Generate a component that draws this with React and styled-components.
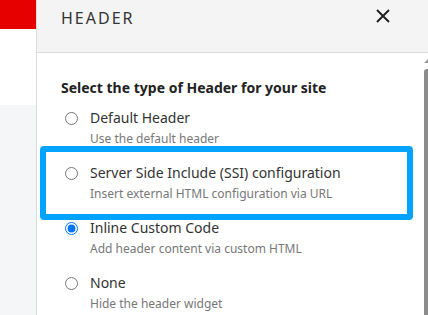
import React from 'react';
import styled, { createGlobalStyle } from 'styled-components';

const GlobalStyle = createGlobalStyle`
  html, body {
    margin: 0;
    padding: 0;
    background: #fff;
    font-family: "Noto Sans", "Open Sans", sans-serif;
  }
`

const options = [
  { id: 'default', label: 'Default Header', desc: 'Use the default header' },
  { id: 'ssi', label: 'Server Side Include (SSI) configuration', desc: 'Insert external HTML configuration via URL', highlight: true },
  { id: 'inline', label: 'Inline Custom Code', desc: 'Add header content via custom HTML' },
  { id: 'none', label: 'None', desc: 'Hide the header widget' },
]

function App() {
  return (
    <>
      <GlobalStyle />
      <Page>
        <SideRail>
          <Brand />
          <RailBlank />
          <RailFill />
        </SideRail>
        <Panel>
          <PanelHeader>
            <PanelTitle>HEADER</PanelTitle>
            <CloseButton aria-label="Close">
              <svg width="14" height="14" viewBox="0 0 14 14">
                <path d="M1 1 L13 13 M13 1 L1 13" stroke="#222" strokeWidth="2" fill="none" />
              </svg>
            </CloseButton>
          </PanelHeader>
          <PanelBody>
            <Content>
              <Question>Select the type of Header for your site</Question>
              <OptionList>
                {options.map((o) => (
                  <Option key={o.id}>
                    {o.highlight && <Highlight />}
                    <OptionRow>
                      <Radio type="radio" name="header-type" readOnly checked={o.id === 'inline'} />
                      <OptionLabel>{o.label}</OptionLabel>
                    </OptionRow>
                    <OptionDesc>{o.desc}</OptionDesc>
                  </Option>
                ))}
              </OptionList>
            </Content>
            <ScrollTrack>
              <ScrollArrow />
              <ScrollThumb />
            </ScrollTrack>
          </PanelBody>
        </Panel>
      </Page>
    </>
  )
}

export default App;

const Page = styled.div`
  display: flex;
  width: 428px;
  height: 315px;
  overflow: hidden;
`
const SideRail = styled.div`
  display: flex;
  flex-direction: column;
  width: 36px;
  flex-shrink: 0;
  border-right: 1px solid #dcdcdc;
`
const Brand = styled.div`
  height: 29px;
  background: #e60000;
`
const RailBlank = styled.div`
  height: 76px;
  background: #fff;
`
const RailFill = styled.div`
  flex: 1;
  background: #f5f6f8;
`
const Panel = styled.div`
  flex: 1;
  display: flex;
  flex-direction: column;
  min-width: 0;
`
const PanelHeader = styled.div`
  display: flex;
  align-items: flex-start;
  justify-content: space-between;
  height: 53px;
  box-sizing: border-box;
  padding: 6px 38px 0 24px;
  background: #f4f4f4;
  border-bottom: 1px solid #d9d9d9;
`
const PanelTitle = styled.h2`
  margin: 0;
  font-size: 16px;
  line-height: 24px;
  font-weight: 400;
  letter-spacing: 2px;
  color: #333;
`
const CloseButton = styled.button`
  display: flex;
  padding: 0;
  margin-top: 3px;
  border: 0;
  background: none;
`
const PanelBody = styled.div`
  flex: 1;
  display: flex;
`
const Content = styled.div`
  flex: 1;
  padding: 25px 0 0 24px;
`
const Question = styled.div`
  font-size: 14px;
  line-height: 20px;
  font-weight: 700;
  color: #222;
`
const OptionList = styled.div`
  display: flex;
  flex-direction: column;
  gap: 16px;
  margin-top: 10px;
`
const Option = styled.div`
  position: relative;
  padding-left: 4px;
`
const Highlight = styled.div`
  position: absolute;
  top: -17px;
  left: -21px;
  right: 11px;
  bottom: -18px;
  border: 6px solid #00a3ff;
  border-radius: 4px;
  pointer-events: none;
`
const OptionRow = styled.div`
  display: flex;
  align-items: center;
  gap: 12px;
  height: 20px;
`
const Radio = styled.input`
  width: 13px;
  height: 13px;
  margin: 1px 0 0;
`
const OptionLabel = styled.span`
  font-size: 14px;
  line-height: 20px;
  color: #333;
`
const OptionDesc = styled.div`
  padding: 2px 0 0 25px;
  font-size: 12px;
  line-height: 17px;
  color: #777;
`
const ScrollTrack = styled.div`
  width: 4px;
  display: flex;
  flex-direction: column;
  padding-top: 6px;
`
const ScrollArrow = styled.div`
  width: 0;
  height: 0;
  border-left: 4px solid transparent;
  border-bottom: 4px solid #9a9a9a;
`
const ScrollThumb = styled.div`
  flex: 1;
  margin-top: 6px;
  background: #8c8c8c;
  border-top-left-radius: 3px;
`
